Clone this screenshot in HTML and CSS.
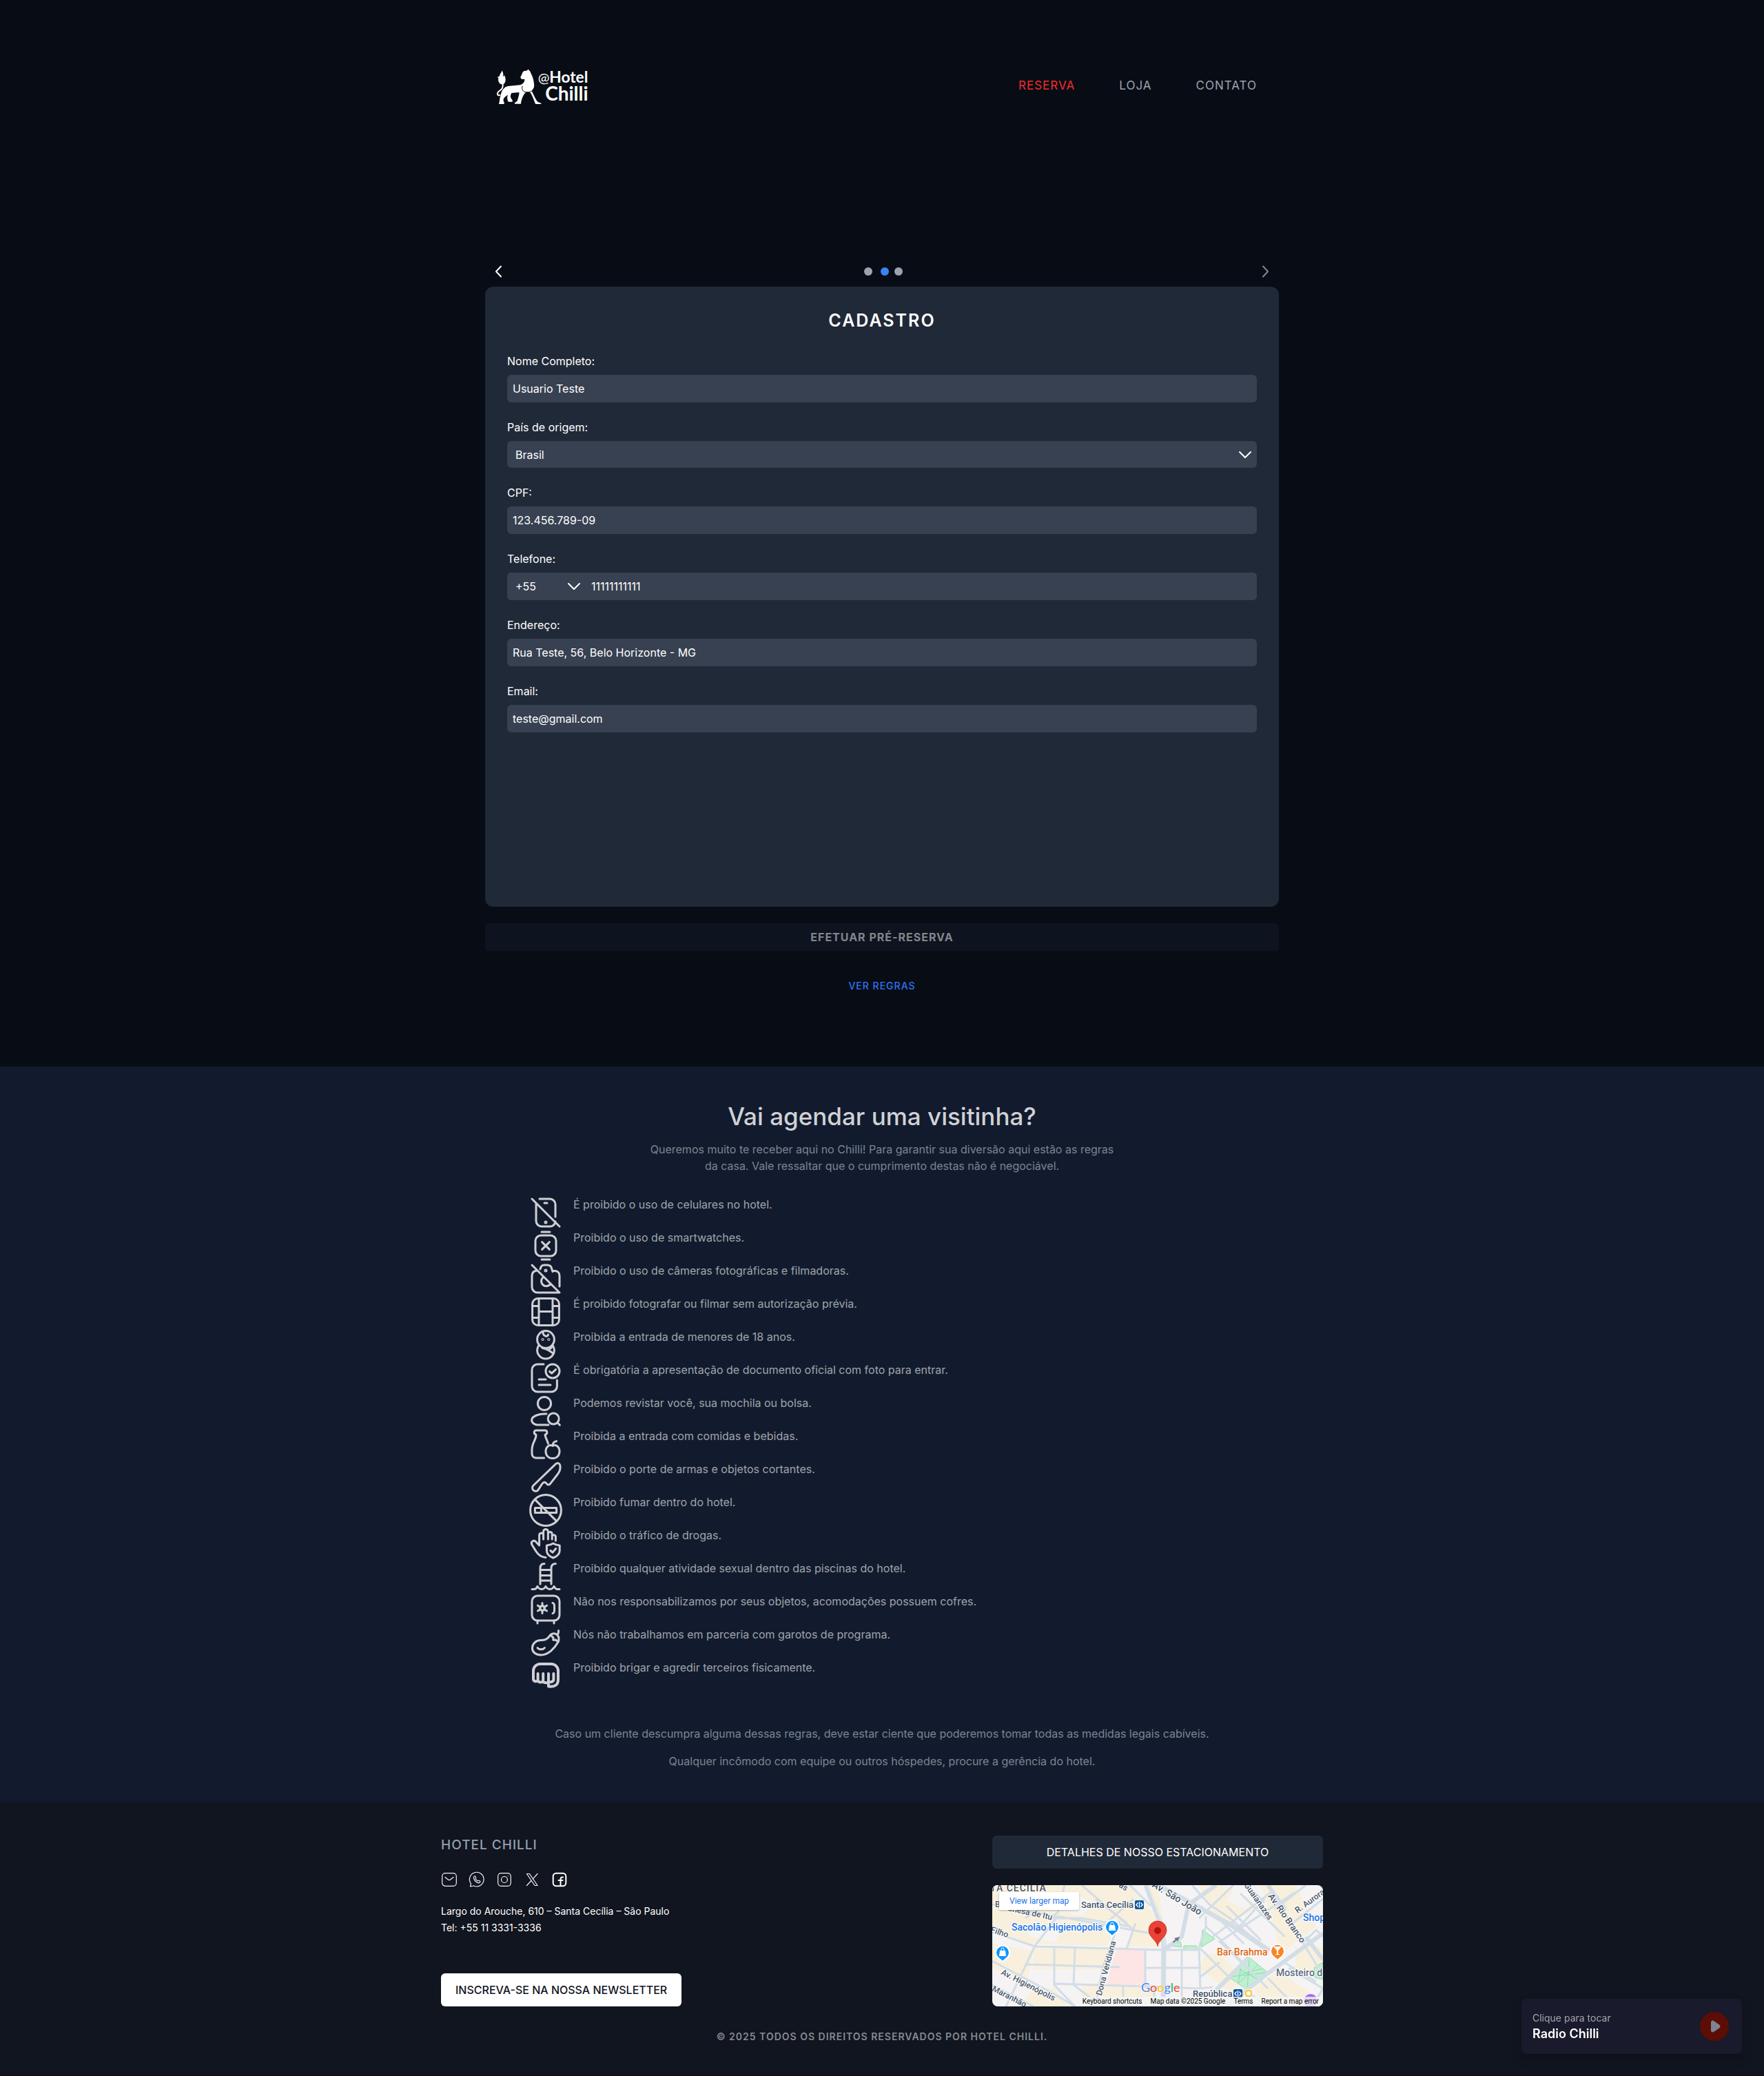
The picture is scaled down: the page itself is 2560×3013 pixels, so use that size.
FILE: index.html
```html
<!DOCTYPE html>
<html lang="pt-BR">
<head>
<meta charset="utf-8">
<meta name="viewport" content="width=device-width, initial-scale=1">
<title>Hotel Chilli - Reserva</title>
<link rel="stylesheet" href="styles.css">
</head>
<body>
<header class="header">
  <a class="logo" href="#" aria-label="Hotel Chilli">
    <svg viewBox="90 60 405 156" width="135" height="52">
      <path fill="none" stroke="currentColor" stroke-width="6" stroke-linecap="round" d="M106 174C92 180 94 162 104 156C118 148 120 140 119 124"/>
      <path fill="currentColor" d="M100 101l-5-7c7 3 10-2 12-10c2-7 9-9 7-17c9 8 6 18 8 27l6-6c-1 6 3 9 3 18c0 14-6 21-14 21c-12 0-20-12-17-26z"/>
      <path fill="currentColor" d="M110 174C114 150 128 134 150 134L196 130C210 124 215 114 214 105L202 104C196 102 194 95 200 88L206 74C210 68 216 68 222 68L230 62L237 70C244 84 253 100 255 125C257 140 252 150 245 157C254 172 262 196 272 204L286 209V213H262C256 204 250 178 238 162L222 160C210 168 200 190 198 212H171C170 206 176 204 182 200C184 190 192 172 190 162L157 165C150 176 152 188 161 196V203H143C137 190 137 182 142 173L134 178C122 186 118 196 125 206V213H102C106 200 105 186 110 174Z"/>
      <path class="logo__cut" d="M205 134c-6 16 2 26 18 28c14 0 26-6 31-18"/>
      <text class="logo__text" x="490" y="121" font-size="68" text-anchor="end"><tspan class="logo__at">@</tspan>Hotel</text>
      <text class="logo__text" x="491" y="198" font-size="84" text-anchor="end">Chilli</text>
    </svg>
  </a>
  <nav class="nav" aria-label="Principal">
    <a class="nav__link nav__link--active" href="#reserva">RESERVA</a>
    <a class="nav__link" href="#loja">LOJA</a>
    <a class="nav__link" href="#contato">CONTATO</a>
  </nav>
</header>

<main>
  <form class="booking" id="reserva">
    <div class="steps">
      <button class="steps__arrow" type="button" aria-label="Voltar"><svg viewBox="0 0 24 24" width="24" height="24"><path d="M15 4.500L8 12L15 19.500"/></svg></button>
      <div class="steps__dots"><span class="dot"></span><span class="dot dot--active"></span><span class="dot"></span></div>
      <button class="steps__arrow" type="button" aria-label="Avançar" disabled><svg viewBox="0 0 24 24" width="24" height="24"><path d="M9 4.500L16 12L9 19.500"/></svg></button>
    </div>
    <section class="card">
      <h1 class="card__title">CADASTRO</h1>
      <div class="field">
        <label for="nome">Nome Completo:</label>
        <input class="control" id="nome" type="text" value="Usuario Teste">
      </div>
      <div class="field">
        <label for="pais">País de origem:</label>
        <div class="select">
          <select id="pais"><option>Brasil</option></select>
          <svg viewBox="0 0 20 20" width="20" height="20"><path d="M2 6l8 8l8-8"/></svg>
        </div>
      </div>
      <div class="field">
        <label for="cpf">CPF:</label>
        <input class="control" id="cpf" type="text" value="123.456.789-09">
      </div>
      <div class="field">
        <label for="telefone">Telefone:</label>
        <div class="phone">
          <div class="select select--code">
            <select aria-label="Código do país"><option>+55</option></select>
            <svg viewBox="0 0 20 20" width="20" height="20"><path d="M2 6l8 8l8-8"/></svg>
          </div>
          <input class="control" id="telefone" type="tel" value="11111111111">
        </div>
      </div>
      <div class="field">
        <label for="endereco">Endereço:</label>
        <input class="control" id="endereco" type="text" value="Rua Teste, 56, Belo Horizonte - MG">
      </div>
      <div class="field">
        <label for="email">Email:</label>
        <input class="control" id="email" type="email" value="teste@gmail.com">
      </div>
    </section>
    <button class="submit" type="submit" disabled>EFETUAR PRÉ-RESERVA</button>
    <a class="rules-link" href="#regras">VER REGRAS</a>
  </form>

  <section class="rules" id="regras">
    <h2 class="rules__title">Vai agendar uma visitinha?</h2>
    <p class="rules__intro">Queremos muito te receber aqui no Chilli! Para garantir sua diversão aqui estão as regras da casa. Vale ressaltar que o cumprimento destas não é negociável.</p>
    <ul class="rules__list">
      <li><svg viewBox="0 0 24 24"><path d="M2 2l20 20M7.500 2H15a4 4 0 0 1 4 4v9M5 5.500V18a4 4 0 0 0 4 4h6a4 4 0 0 0 4-3.500M11 5h2"/><circle cx="12" cy="19" r=".5"/></svg>É proibido o uso de celulares no hotel.</li>
      <li><svg viewBox="0 0 24 24"><rect x="4.500" y="4.500" width="15" height="15" rx="4"/><path d="M9 2h6M9 22h6M9.300 9.300l5.400 5.400M14.700 9.300l-5.400 5.400"/></svg>Proibido o uso de smartwatches.</li>
      <li><svg viewBox="0 0 24 24"><path d="M2 2l20 20M8 5c.5-2 1-3 3-3h2c2 0 3 1 3.300 2.500l.7 2.300V6.400C19.500 6 22 6.500 22 10v7.500M5.500 6C3 6.300 2 7.500 2 10v8a4 4 0 0 0 4 4h15M10 11a3.600 3.600 0 1 0 5.500 4.500"/><circle cx="12" cy="6" r=".5"/></svg>Proibido o uso de câmeras fotográficas e filmadoras.</li>
      <li><svg viewBox="0 0 24 24"><rect x="2.300" y="2.300" width="19.400" height="19.400" rx="4"/><path d="M7 2.500v19M17 2.500v19M7 11.800h10M2.500 7.800H7M17 7.800h4.500M2.500 16.200H7M17 16.200h4.500"/></svg>É proibido fotografar ou filmar sem autorização prévia.</li>
      <li><svg viewBox="0 0 24 24"><circle cx="12" cy="8" r="6.200"/><path d="M7 12.200a6.200 6.200 0 0 0-1.200 3.600a6.200 6.200 0 0 0 12.400 0a6.200 6.200 0 0 0-1.200-3.600M9.500 14.200c3 .3 5.500 2 7.800 3.800M17 12.500c-.6 1.300-1.500 2.200-2.800 2.800M10 2.500c0 3.800 3.600 3.600 3.800 2"/><circle cx="9.800" cy="8" r=".3"/><circle cx="14.200" cy="8" r=".3"/></svg>Proibida a entrada de menores de 18 anos.</li>
      <li><svg viewBox="0 0 24 24"><circle cx="17" cy="7" r="5"/><path d="M14.800 7.200l1.500 1.400l3-2.800M10.500 2H6a4 4 0 0 0-4 4v12a4 4 0 0 0 4 4h10.200a4 4 0 0 0 4-4v-4.500M7 13h5M7 17h8.500"/></svg>É obrigatória a apresentação de documento oficial com foto para entrar.</li>
      <li><svg viewBox="0 0 24 24"><circle cx="11" cy="6.500" r="4.800"/><circle cx="17.600" cy="17.500" r="4"/><path d="M20.500 20.400l1.700 1.700M12.500 14C7 13.700 1.800 15.800 1.800 18.500C1.800 20.500 4 22 6 22h8"/></svg>Podemos revistar você, sua mochila ou bolsa.</li>
      <li><svg viewBox="0 0 24 24"><path d="M4.800 5C3 4.500 3.500 2 5 2h6.500c1.700 0 2 2.500.2 3M5 5.200C5 9 2 11 2 16v3a3 3 0 0 0 3 3h5.800M11.500 5.200c.3 2.500 1.700 3.800 2.200 6.300M17 13.200c-2-1.200-5 .2-5 4.100c0 3.200 2.200 5 5 5s5-1.800 5-5c0-3.900-3-5.300-5-4.100zM17 13c0-1.500 1-2.800 2.800-3.200"/></svg>Proibida a entrada com comidas e bebidas.</li>
      <li><svg viewBox="0 0 24 24"><path d="M3 18L19.300 2.300c1.100-1 2.700-.7 3.100 1c.5 2.400-.3 4.700-1.900 6.700L15.200 16.800c-.7.900-1.700.9-2.400 0c-1.200-1.700-2.500-1.500-3.500.1L6.500 21.200c-.9 1.300-2.600 1.200-3.500.2c-1-1-.9-2.400 0-3.400z"/></svg>Proibido o porte de armas e objetos cortantes.</li>
      <li><svg viewBox="0 0 24 24"><circle cx="12" cy="12" r="11.200"/><path d="M4.200 4.200l15.600 15.600M4.200 10.300h15.600v3.400H4.200zM8.700 10.300v3.400"/></svg>Proibido fumar dentro do hotel.</li>
      <li><svg viewBox="0 0 24 24"><path d="M12 22.200C6.500 22 4.500 17 2 13C.8 10.800 3.500 9 5 11l2.300 2.500V6a1.500 1.500 0 0 1 3 0v3M10.300 9V3.400a1.700 1.700 0 0 1 3.400 0V9M13.700 4.700a1.500 1.500 0 0 1 2.900.6V9M16.600 7a1.300 1.300 0 0 1 2.600.5V10M17.400 12c-1.500 1-3 1.300-4.700 1.500v3.700c0 2.700 2.200 4.300 4.700 5.300c2.500-1 4.700-2.600 4.700-5.300v-3.700c-1.700-.2-3.200-.5-4.700-1.500zM15.400 17.200l1.500 1.400l2.500-2.800"/></svg>Proibido o tráfico de drogas.</li>
      <li><svg viewBox="0 0 24 24"><path d="M8 17.500V6c0-2 1-3.300 3-3.300M16 17.500V6c0-2 1-3.300 3.200-3.300M8 7.300h8M8 11.200h8M8 15h8M2 21.200h1.800c1.300 0 2.200-2 2.200-2s1 2 3 2s3-2 3-2s1 2 3 2s3-2 3-2s1 2 2.200 2H22"/></svg>Proibido qualquer atividade sexual dentro das piscinas do hotel.</li>
      <li><svg viewBox="0 0 24 24"><rect x="2" y="2" width="20" height="18" rx="4"/><path d="M6 20v2M18 20v2M17 7.200c1.300.4 1.300 1.300 1.300 3.800s0 3.400-1.300 3.800M9.500 7.200v2.300M9.500 12.500v2.300M6.200 9.100l2 1.200M10.800 11.800l2 1.200M12.800 9.100l-2 1.200M8.200 11.800l-2 1.200"/><circle cx="9.500" cy="11" r="1.700"/></svg>Não nos responsabilizamos por seus objetos, acomodações possuem cofres.</li>
      <li><svg viewBox="0 0 24 24"><path d="M15.400 6.500C12.500 10.500 11 10 8 10.300C4.500 10.700 2.200 13 2.200 16C2.200 19 5 21 8.500 21C14 21 18.500 16 21 11.500M15.400 6.300c1.800-1.200 3.700-1.200 5 .2c1.300 1.400 1.400 3.200.6 5.200c-.6-.8-1.200-1.200-1.700-1.700c-.7.200-1.200.2-1.900 0c.2-.9.200-1.200 0-1.700c-.8-.6-1.500-1.100-2-2zM20.300 6.500c.8-.8 1-2 1-3.300M6 15.800c1.200 1.500 4 1.500 5.200 0"/></svg>Nós não trabalhamos em parceria com garotos de programa.</li>
      <li><svg viewBox="0 0 24 24" class="bold"><path d="M6.300 10.500v4.800c0 1.200-3.300 1.200-3.300-.8V8.500a5 5 0 0 1 5-5h8a5 5 0 0 1 5 5v6.200c0 4-2.500 5.600-7 5.100v-1.600M6.300 15.300c.3 1.800 3.800 2 3.800.3v-5.100M10.100 15.800c.3 1.700 3.900 1.800 3.900 0v-5.300M14 16c.6 1 3.700.8 3.700-1.200v-4.300"/></svg>Proibido brigar e agredir terceiros fisicamente.</li>
    </ul>
    <div class="rules__notes">
      <p>Caso um cliente descumpra alguma dessas regras, deve estar ciente que poderemos tomar todas as medidas legais cabíveis.</p>
      <p>Qualquer incômodo com equipe ou outros hóspedes, procure a gerência do hotel.</p>
    </div>
  </section>
</main>

<footer class="footer" id="contato">
  <div class="footer__main">
    <div class="footer__info">
      <h2 class="footer__title">HOTEL CHILLI</h2>
      <div class="social">
        <a href="#" aria-label="Email"><svg viewBox="0 0 24 24"><rect x="1.700" y="2.700" width="20.600" height="18.600" rx="4.500"/><path d="M6 8.500l4 3.200c1.200 1 2.800 1 4 0l4-3.200"/></svg></a>
        <a href="#" aria-label="WhatsApp"><svg viewBox="0 0 24 24"><path d="M2.500 22l1-4.200A10.300 10.300 0 1 1 7.500 21z"/><path d="M8 7.500c1-1 2-.5 2.500 1c.3 1 .3 1.500-.4 2.200c.7 1.500 1.800 2.500 3.300 3.200c.8-.8 1.300-.9 2.300-.4c1.500.7 1.500 1.600.5 2.500c-1.500 1.300-4 .5-6-1.500s-3.700-5.500-2.200-7z"/></svg></a>
        <a href="#" aria-label="Instagram"><svg viewBox="0 0 24 24"><rect x="2.700" y="2.700" width="18.600" height="18.600" rx="4.500"/><circle cx="12" cy="12" r="4.500"/><path d="M17.400 6.500v.01"/></svg></a>
        <a href="#" aria-label="X"><svg viewBox="0 0 24 24"><path d="M4.500 3.500h4l11.500 17h-4zM20 3.500l-6.800 7.600M11 13.500l-6.500 7"/></svg></a>
        <a href="#" aria-label="Facebook"><svg viewBox="0 0 24 24" class="bold"><rect x="2.700" y="2.700" width="18.600" height="18.600" rx="4.500"/><path d="M17 8.500h-1c-2 0-2.500 1-2.500 2.500v10M10.500 13h6"/></svg></a>
      </div>
      <address class="address">Largo do Arouche, 610 – Santa Cecília – São Paulo<br>Tel: +55 11 3331-3336</address>
      <button class="newsletter" type="button">INSCREVA-SE NA NOSSA NEWSLETTER</button>
    </div>
    <div class="footer__side">
      <button class="parking" type="button">DETALHES DE NOSSO ESTACIONAMENTO</button>
      <div class="map">
        <svg class="map__canvas" viewBox="0 0 480 176" preserveAspectRatio="xMidYMid slice" role="img" aria-label="Mapa do Hotel Chilli">
          <rect width="480" height="176" fill="#f5f3f4"/>
          <g fill="#f8f0dc">
            <path d="M0 0H200L245 55L230 62L245 90L55 85L0 65ZM0 85L60 95L50 140L0 120ZM60 92H170L160 122H60ZM220 0H240L250 60ZM300 0H335L390 30L345 55L320 40ZM390 0H440L470 60L420 100ZM60 150H90L110 176H40ZM130 145H235V165H130ZM310 100H330L370 140L345 155L300 120ZM380 150L415 125L480 170V176H390ZM440 90H480V130H440Z"/>
          </g>
          <path fill="#f5f3f4" d="M110 10l40 15l-20 20l-40-10zM60 55l40 8l-8 20l-40-10zM180 55l25 8l-8 25h-30zM350 8l30 12l-10 15l-30-12z"/>
          <path fill="#fde5e3" d="M180 94H222V145H165Z"/>
          <g fill="#c0efd1" stroke="#8fd9ac"><path d="M373 105L400 127L370 152L343 133ZM305 65L323 78L303 90ZM258 88l15-6l2 8zM278 88h18l2 6h-20zM467 120l13-8v25l-12-3z"/><path fill="none" d="M373 105L370 152M343 133L400 127M355 120L388 138M358 142L386 115M362 114l-5 28M392 121l-30 8"/></g>
          <g fill="none" stroke="#d3dde6" stroke-width="3">
            <path d="M105 0L95 40L85 48M0 28L230 70L250 85M48 48L105 12M80 48H130L200 60M0 68L62 89L245 94H300M62 88L95 45M62 88L20 176M90 88V145L120 176M120 92L118 145M50 115L185 119M90 143L220 147L300 150L320 148M185 52L160 120L150 176M208 55L195 92M222 94V147M222 120H300M275 92V176M300 90L302 150M302 133L330 112M0 110L90 158L120 176M0 145L60 176M118 145L160 176M190 147V176M235 147V176M200 0L230 30M150 20L195 55M205 20L160 60M130 0L205 65"/>
            <path d="M290 0L315 28L345 48L370 70L400 92M350 0L300 48M405 10L320 75M370 0L395 25M440 10L330 82L380 130M325 45L365 85M340 30L390 80M360 12L425 75M395 20L350 70M310 45V60L300 90M310 60L330 78L400 150M302 92L345 135M345 135L325 155L345 176M400 0L470 115L480 130M410 35L455 0M430 60L480 20M450 85L470 65L480 75M430 120L480 150L465 176M400 135L440 176M370 155L400 176M420 110L470 140"/>
          </g>
          <g fill="none" stroke="#d3dde6" stroke-width="7"><path d="M223 0L244 55L249 85L248 176M240 0L300 32L350 60L402 95"/><path d="M325 0L285 28L275 75L252 92M480 70L400 128L340 176M400 0L425 35M455 75L480 108M325 152L372 105" stroke-width="6"/></g>
          <g fill="none" stroke="#fff" stroke-width="1" opacity=".6"><path d="M226 0L246 55L250 90"/></g>
          <g class="map__road">
            <text x="-3" y="9" class="map__area">TA CECILIA</text>
            <text x="4" y="32">B</text><text x="22" y="37" transform="rotate(12 22 37)">onesa de Itu</text>
            <text x="-3" y="68" transform="rotate(18 -3 68)">Filho</text>
            <text x="12" y="129" transform="rotate(27 12 129)">Av. Higienópolis</text>
            <text x="-1" y="153" transform="rotate(27 -1 153)">Maranhão</text>
            <text x="156" y="170" transform="rotate(-75 156 170)">a Dona Veridiana</text>
            <text x="183" y="2" transform="rotate(32 183 2)">as</text>
            <text x="231" y="2" font-size="14" transform="rotate(31 231 2)">Av. São João</text>
            <text x="365" y="0" transform="rotate(55 365 0)">Guaianazes</text>
            <text class="map__avenue" x="400" y="16" transform="rotate(55 400 16)">Av. Rio Branco</text>
            <text x="443" y="41" transform="rotate(-36 443 41)">R. Aurora</text>
          </g>
          <g class="map__place">
            <text x="129" y="33">Santa Cecília</text><text x="291" y="162">República</text>
            <text x="28" y="66" font-size="14" fill="#1a73e8">Sacolão Higienópolis</text>
            <text x="326" y="102" font-size="14" fill="#e0640c">Bar Brahma</text>
            <text x="451" y="52" font-size="14" fill="#1a73e8">Shopping</text>
            <text x="412" y="132" font-size="14" fill="#5b6b80">Mosteiro de</text>
          </g>
          <g stroke="#fff" stroke-width="2"><path fill="#0b96ff" d="M174 74l-7-6a10 10 0 1 1 14 0zM15 111l-7-6a10 10 0 1 1 14 0z"/><path fill="#fb8425" d="M414 109l-7-6a10 10 0 1 1 14 0z"/></g>
          <g fill="#fff"><path d="M170 58h8l1 8h-10zM11 95h8l1 8h-10zM408 89h12l-5 6v5h2v1h-6v-1h2v-5z"/><path fill="none" stroke="#fff" d="M172 58v-2a2 2 0 0 1 4 0v2M13 95v-2a2 2 0 0 1 4 0v2"/></g>
          <path fill="#ea4335" stroke="#b31412" stroke-width=".6" d="M240 89c-1-9-13-13-13-24a13 13 0 0 1 26 0c0 11-12 15-13 24z"/><circle cx="240" cy="66" r="5" fill="#b31412"/>
          <g fill="#0b57a4"><rect x="207" y="22" width="13" height="13" rx="2"/><rect x="350" y="151" width="13" height="13" rx="2"/></g>
          <path fill="none" stroke="#fff" stroke-width="1.400" d="M213.500 24v9M211.500 25.500l-2.500 3l2.500 3M215.500 25.500l2.500 3l-2.500 3M356.500 153v9M354.500 154.500l-2.500 3l2.500 3M358.500 154.500l2.500 3l-2.500 3"/>
          <circle cx="372" cy="157" r="6" fill="#fcc934" stroke="#fff"/><circle cx="372" cy="157" r="3" fill="#fff"/>
          <circle cx="462" cy="168" r="10" fill="#a965f5"/>
          <path fill="#6f7b86" d="M262 82l4-3l-2-2l8-2l-3 7l-1-2l-5 4z"/>
          <text class="map__google" x="216" y="155"><tspan fill="#4285f4">G</tspan><tspan fill="#ea4335">o</tspan><tspan fill="#fbbc04">o</tspan><tspan fill="#4285f4">g</tspan><tspan fill="#34a853">l</tspan><tspan fill="#ea4335">e</tspan></text>
        </svg>
        <a class="map__larger" href="#">View larger map</a>
        <div class="map__legal"><button type="button">Keyboard shortcuts</button><span>Map data ©2025 Google</span><a href="#">Terms</a><a href="#">Report a map error</a></div>
      </div>
    </div>
  </div>
  <p class="copyright">© 2025 TODOS OS DIREITOS RESERVADOS POR HOTEL CHILLI.</p>
</footer>

<aside class="radio">
  <div>
    <p class="radio__hint">Clique para tocar</p>
    <p class="radio__name">Radio Chilli</p>
  </div>
  <button class="radio__play" type="button" aria-label="Tocar rádio"><svg viewBox="0 0 48 48" width="48" height="48"><circle cx="24" cy="24" r="21" fill="#5c0d05"/><path fill="#7d8391" d="M19 18c0-2 2-3 4-2l8 5.500c2 1.500 2 3.500 0 5L23 32c-2 1-4 0-4-2z"/></svg></button>
</aside>
</body>
</html>
```
FILE: styles.css
```css
* { box-sizing: border-box; margin: 0; padding: 0; }
body { background: #080d15; color: #fff; font: 16px/24px Inter, "Liberation Sans", sans-serif; }
a { color: inherit; text-decoration: none; }
button, input, select { font: inherit; color: inherit; border: 0; background: none; }
button { cursor: pointer; }
svg { display: block; }

.header { max-width: 1152px; margin: 0 auto; padding: 100px 32px 0 16px; display: flex; justify-content: space-between; align-items: flex-start; }
.logo__text { font-family: Lato, sans-serif; font-weight: 700; fill: currentColor; }
.logo__at { font-size: 60px; font-weight: 400; }
.logo__cut { fill: none; stroke: #080d15; stroke-width: 3; }
.nav { display: flex; gap: 64px; padding-top: 12px; }
.nav__link { color: #9ca3af; font-size: 17px; letter-spacing: 1px; }
.nav__link--active { color: #f52b2b; }

.booking { max-width: 1152px; margin: 0 auto; padding: 222px 0 105px; display: flex; flex-direction: column; }
.steps { display: flex; justify-content: space-between; align-items: center; height: 40px; margin-bottom: 2px; }
.steps__arrow { width: 40px; height: 40px; display: grid; place-items: center; }
.steps__arrow path, .select path { fill: none; stroke: currentColor; stroke-width: 2; stroke-linecap: round; stroke-linejoin: round; }
.steps__arrow:disabled { opacity: .5; }
.steps__dots { display: flex; gap: 8px; padding-left: 4px; }
.dot { width: 12px; height: 12px; border-radius: 50%; background: #9ca3af; }
.dot--active { margin-left: 4px; background: #3b82f6; }
.card { min-height: 900px; padding: 32px; border-radius: 12px; background: #202937; }
.card__title { margin-bottom: 30px; font-size: 25px; line-height: 34px; font-weight: 600; letter-spacing: 2px; text-align: center; }
.field { display: flex; flex-direction: column; gap: 8px; margin-bottom: 24px; }
.control { width: 100%; height: 40px; padding: 0 8px; border-radius: 6px; background: #384151; }
.select { display: grid; align-items: center; border-radius: 6px; background: #384151; }
.select select { grid-area: 1 / 1; height: 39px; padding: 0 36px 0 12px; appearance: none; }
.select svg { grid-area: 1 / 1; justify-self: end; margin-right: 7px; pointer-events: none; }
.phone { display: flex; border-radius: 6px; background: #384151; }
.select--code { flex: 0 0 114px; }
.submit { height: 40px; margin: 24px 0 39px; border-radius: 6px; background: #0d1420; color: #84868b; font-weight: 700; letter-spacing: 1px; }
.rules-link { align-self: center; color: #2f74f5; font-size: 14px; font-weight: 500; letter-spacing: 1px; }

.rules { padding: 48px 32px; background: #121b2d; color: #7c8492; text-align: center; }
.rules__title { margin-bottom: 12px; color: #d0d1d5; font-size: 35px; line-height: 48px; font-weight: 500; }
.rules__intro { max-width: 688px; margin: 0 auto 32px; }
.rules__list { max-width: 1024px; margin: 0 auto 48px; list-style: none; color: #a0a4ac; text-align: left; }
.rules__list li { display: flex; gap: 16px; }
.rules__list svg { flex: none; width: 48px; height: 48px; }
.rules__list svg, .social svg { fill: none; stroke: #cfcfd5; stroke-width: 1.5; stroke-linecap: round; stroke-linejoin: round; }
.rules__list .bold { stroke-width: 2; }
.rules__notes { display: flex; flex-direction: column; gap: 16px; }

.footer { padding: 48px 32px 44px; background: #10151f; }
.footer__main { max-width: 1280px; margin: 0 auto; display: flex; justify-content: space-between; gap: 32px; }
.footer__info { display: flex; flex-direction: column; align-items: flex-start; }
.footer__title { margin-bottom: 24px; color: #94a0b0; font-size: 19px; line-height: 28px; font-weight: 500; letter-spacing: 1px; }
.social { display: flex; gap: 16px; margin-bottom: 22px; }
.social svg { width: 24px; height: 24px; stroke: #f2f2f4; stroke-width: 1.2; }
.social .bold { stroke: #fff; stroke-width: 2; }
.address { margin-bottom: auto; font-size: 14px; font-style: normal; }
.newsletter { height: 48px; padding: 0 21px; border-radius: 6px; background: #fff; color: #10151f; font-weight: 500; }
.footer__side { flex: 0 1 480px; display: flex; flex-direction: column; gap: 24px; }
.parking { height: 48px; border-radius: 6px; background: #202937; }
.map { position: relative; height: 176px; border-radius: 8px; overflow: hidden; font-family: Roboto, sans-serif; }
.map__canvas { width: 100%; height: 100%; }
.map text { stroke: #fff; stroke-width: 2px; paint-order: stroke; }
.map__road { fill: #47566b; font-size: 12px; font-weight: 500; }
.map__road .map__area { fill: #4a5057; font-size: 14px; letter-spacing: 1px; }
.map__road .map__avenue { font-size: 13px; }
.map__place { fill: #3f5068; font-size: 13px; font-weight: 500; }
.map .map__google { font-family: Lato, sans-serif; font-size: 18px; stroke-width: 1px; }
.map__larger { position: absolute; top: 10px; left: 10px; padding: 0 15px; border-radius: 2px; background: #fff; color: #1a73e8; font-size: 12px; line-height: 26px; box-shadow: 0 1px 3px #0004; }
.map__legal { position: absolute; right: 0; bottom: 0; display: flex; gap: 12px; padding: 0 6px; background: #f5f5f5cc; color: #000; font-size: 10px; line-height: 14px; }

.copyright { margin-top: 32px; color: #878b93; font-size: 14px; line-height: 24px; font-weight: 600; letter-spacing: 1px; text-align: center; }

.radio { position: fixed; right: 32px; bottom: 32px; width: 320px; height: 80px; padding: 0 16px; display: flex; justify-content: space-between; align-items: center; border-radius: 8px; background: #191a2b; box-shadow: 0 8px 16px #0003; }
.radio__hint { color: #a5a5ad; font-size: 14px; line-height: 22px; }
.radio__name { font-size: 18px; line-height: 24px; font-weight: 600; }
```
